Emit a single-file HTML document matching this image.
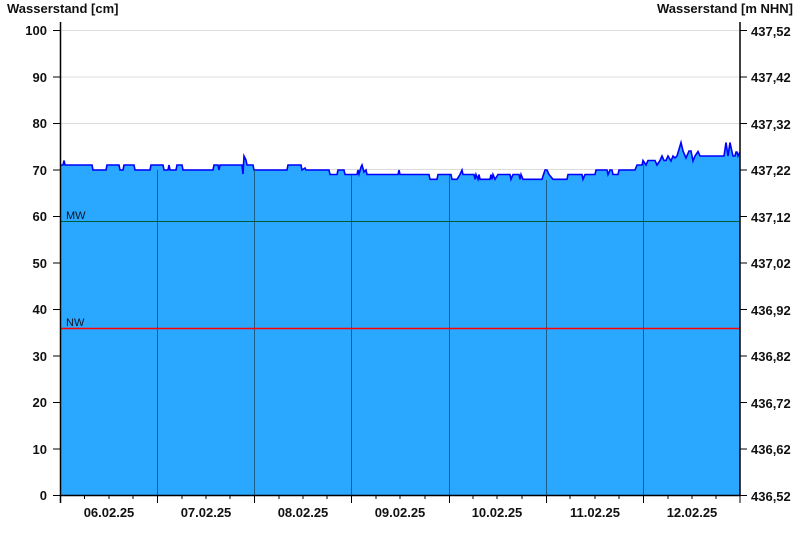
<!DOCTYPE html>
<html><head><meta charset="utf-8"><style>
html,body{margin:0;padding:0;background:#fff;width:800px;height:550px;overflow:hidden}
svg{display:block;font-family:"Liberation Sans",Arial,sans-serif}
.t{font-weight:bold;font-size:13px;fill:#111}
.l{font-weight:bold;font-size:13px;fill:#111}
</style></head><body>
<svg width="800" height="550" viewBox="0 0 800 550">
<defs>
<path id="d" d="M60,165 L63,165 L64,160.5 L65,165 L92,165 L93,170 L106,170 L107,165 L119,165 L120,170 L123,170 L124,165 L134,165 L135,170 L150,170 L151,165 L163,165 L164,170 L168,170 L169,165 L170,170 L176,170 L177,165 L182,165 L183,170 L213,170 L214,165 L218,165 L219,170 L220,165 L242,165 L243,174 L244,156 L246,160 L247,165 L253,165 L254,170 L287,170 L288,165 L301,165 L302,170 L305,168 L306,170 L329,170 L330,174.5 L337,174.5 L338,170 L344,170 L345,174.5 L357,174.5 L358,170 L359,174 L361,167 L362,165 L364,172 L366,170 L367,174.5 L369,174.5 L370,174.5 L398,174.5 L399,170 L400,174.5 L429,174.5 L430,179.3 L437,179.3 L438,174.5 L451,174.5 L452,179.3 L457,179.3 L460,174.5 L462,170 L463,174.5 L474,174.5 L475,179.3 L476,174.5 L478,179.3 L479,174.5 L480,179.3 L490,179.3 L491,174.5 L492,179.3 L493,174.5 L495,179.3 L498,174.5 L510,174.5 L511,179.3 L513,174.5 L519,174.5 L520,179.3 L521,174.5 L523,179.3 L542,179.3 L545,170 L547,170 L549,174.5 L553,179.3 L567,179.3 L568,174.5 L582,174.5 L583,179.3 L585,174.5 L595,174.5 L596,170 L607,170 L608,174.5 L610,170 L612,170 L613,174.5 L618,174.5 L619,170 L635,170 L637,165 L642,165 L643,160.5 L646,165 L648,160.5 L655,160.5 L657,165 L660,160.5 L662,156 L664,160.5 L666,160.5 L668,156 L671,161 L673,156 L675,158 L677,156 L680,146 L681,142.5 L683,151 L686,158 L689,151 L691,151 L693,161 L695,156 L698,151.5 L700,156 L724,156 L726,142.5 L728,156 L730,142.5 L732,152 L733,156 L735,156 L736,152 L737,152 L738,156 L740,152"/>
</defs>
<text x="7" y="13" class="t">Wasserstand [cm]</text>
<text x="793" y="13" class="t" text-anchor="end">Wasserstand [m NHN]</text>
<g stroke="#dcdcdc" stroke-width="1">
<line x1="60" x2="740" y1="30.5" y2="30.5"/>
<line x1="60" x2="740" y1="77" y2="77"/>
<line x1="60" x2="740" y1="123.5" y2="123.5"/>
<line x1="60" x2="740" y1="169.5" y2="169.5"/>
</g>
<path fill="#2aa8ff" stroke="none" d="M60,495 L60,165 L63,165 L64,160.5 L65,165 L92,165 L93,170 L106,170 L107,165 L119,165 L120,170 L123,170 L124,165 L134,165 L135,170 L150,170 L151,165 L163,165 L164,170 L168,170 L169,165 L170,170 L176,170 L177,165 L182,165 L183,170 L213,170 L214,165 L218,165 L219,170 L220,165 L242,165 L243,174 L244,156 L246,160 L247,165 L253,165 L254,170 L287,170 L288,165 L301,165 L302,170 L305,168 L306,170 L329,170 L330,174.5 L337,174.5 L338,170 L344,170 L345,174.5 L357,174.5 L358,170 L359,174 L361,167 L362,165 L364,172 L366,170 L367,174.5 L369,174.5 L370,174.5 L398,174.5 L399,170 L400,174.5 L429,174.5 L430,179.3 L437,179.3 L438,174.5 L451,174.5 L452,179.3 L457,179.3 L460,174.5 L462,170 L463,174.5 L474,174.5 L475,179.3 L476,174.5 L478,179.3 L479,174.5 L480,179.3 L490,179.3 L491,174.5 L492,179.3 L493,174.5 L495,179.3 L498,174.5 L510,174.5 L511,179.3 L513,174.5 L519,174.5 L520,179.3 L521,174.5 L523,179.3 L542,179.3 L545,170 L547,170 L549,174.5 L553,179.3 L567,179.3 L568,174.5 L582,174.5 L583,179.3 L585,174.5 L595,174.5 L596,170 L607,170 L608,174.5 L610,170 L612,170 L613,174.5 L618,174.5 L619,170 L635,170 L637,165 L642,165 L643,160.5 L646,165 L648,160.5 L655,160.5 L657,165 L660,160.5 L662,156 L664,160.5 L666,160.5 L668,156 L671,161 L673,156 L675,158 L677,156 L680,146 L681,142.5 L683,151 L686,158 L689,151 L691,151 L693,161 L695,156 L698,151.5 L700,156 L724,156 L726,142.5 L728,156 L730,142.5 L732,152 L733,156 L735,156 L736,152 L737,152 L738,156 L740,152 L740,495 Z"/>
<use href="#d" fill="none" stroke="#0000ff" stroke-width="1.6"/>
<g stroke="#1a5f8a" stroke-width="1">
<line x1="157.5" x2="157.5" y1="170" y2="495"/>
<line x1="254.5" x2="254.5" y1="170" y2="495"/>
<line x1="351.5" x2="351.5" y1="175" y2="495"/>
<line x1="449.5" x2="449.5" y1="175" y2="495"/>
<line x1="546.5" x2="546.5" y1="180" y2="495"/>
<line x1="643.5" x2="643.5" y1="163" y2="495"/>
</g>
<line x1="60" x2="740" y1="221.5" y2="221.5" stroke="#005a3c" stroke-width="1"/>
<line x1="60" x2="740" y1="328.5" y2="328.5" stroke="#ff0000" stroke-width="1.5"/>
<text x="66" y="219" font-size="11" fill="#112">MW</text>
<text x="66" y="326" font-size="11" fill="#112">NW</text>
<g stroke="#000" stroke-width="1.5" fill="none">
<line x1="60.5" x2="60.5" y1="22" y2="503"/>
<line x1="740" x2="740" y1="22" y2="495"/>
<line x1="60" x2="740" y1="495.5" y2="495.5"/>
</g>
<g stroke="#000" stroke-width="1">
<path d="M53,30.5h7M53,77h7M53,123.5h7M53,170h7M53,216.5h7M53,263h7M53,309.5h7M53,356h7M53,402.5h7M53,449h7M53,495.5h7"/>
<path d="M740,30.5h7M740,77h7M740,123.5h7M740,170h7M740,216.5h7M740,263h7M740,309.5h7M740,356h7M740,402.5h7M740,449h7M740,495.5h7"/>
<path d="M157.5,495v8M254.5,495v8M351.5,495v8M449.5,495v8M546.5,495v8M643.5,495v8M60.5,495v8M740,495v8"/>
<path d="M84.5,495v4M109,495v4M133,495v4M182,495v4M206,495v4M230,495v4M279,495v4M303,495v4M327,495v4M376,495v4M400,495v4M425,495v4M473,495v4M497,495v4M522,495v4M570,495v4M595,495v4M619,495v4M668,495v4M692,495v4M716,495v4"/>
</g>
<g class="l" text-anchor="end">
<text x="47" y="35">100</text><text x="47" y="82">90</text><text x="47" y="128">80</text><text x="47" y="175">70</text><text x="47" y="221">60</text><text x="47" y="268">50</text><text x="47" y="314">40</text><text x="47" y="361">30</text><text x="47" y="407">20</text><text x="47" y="454">10</text><text x="47" y="500">0</text>
</g>
<g class="l">
<text x="751" y="36">437,52</text><text x="751" y="82">437,42</text><text x="751" y="129">437,32</text><text x="751" y="175">437,22</text><text x="751" y="222">437,12</text><text x="751" y="268">437,02</text><text x="751" y="315">436,92</text><text x="751" y="361">436,82</text><text x="751" y="408">436,72</text><text x="751" y="454">436,62</text><text x="751" y="501">436,52</text>
</g>
<g class="l" text-anchor="middle">
<text x="109" y="517">06.02.25</text><text x="206" y="517">07.02.25</text><text x="303" y="517">08.02.25</text><text x="400" y="517">09.02.25</text><text x="497" y="517">10.02.25</text><text x="595" y="517">11.02.25</text><text x="692" y="517">12.02.25</text>
</g>
</svg>
</body></html>
